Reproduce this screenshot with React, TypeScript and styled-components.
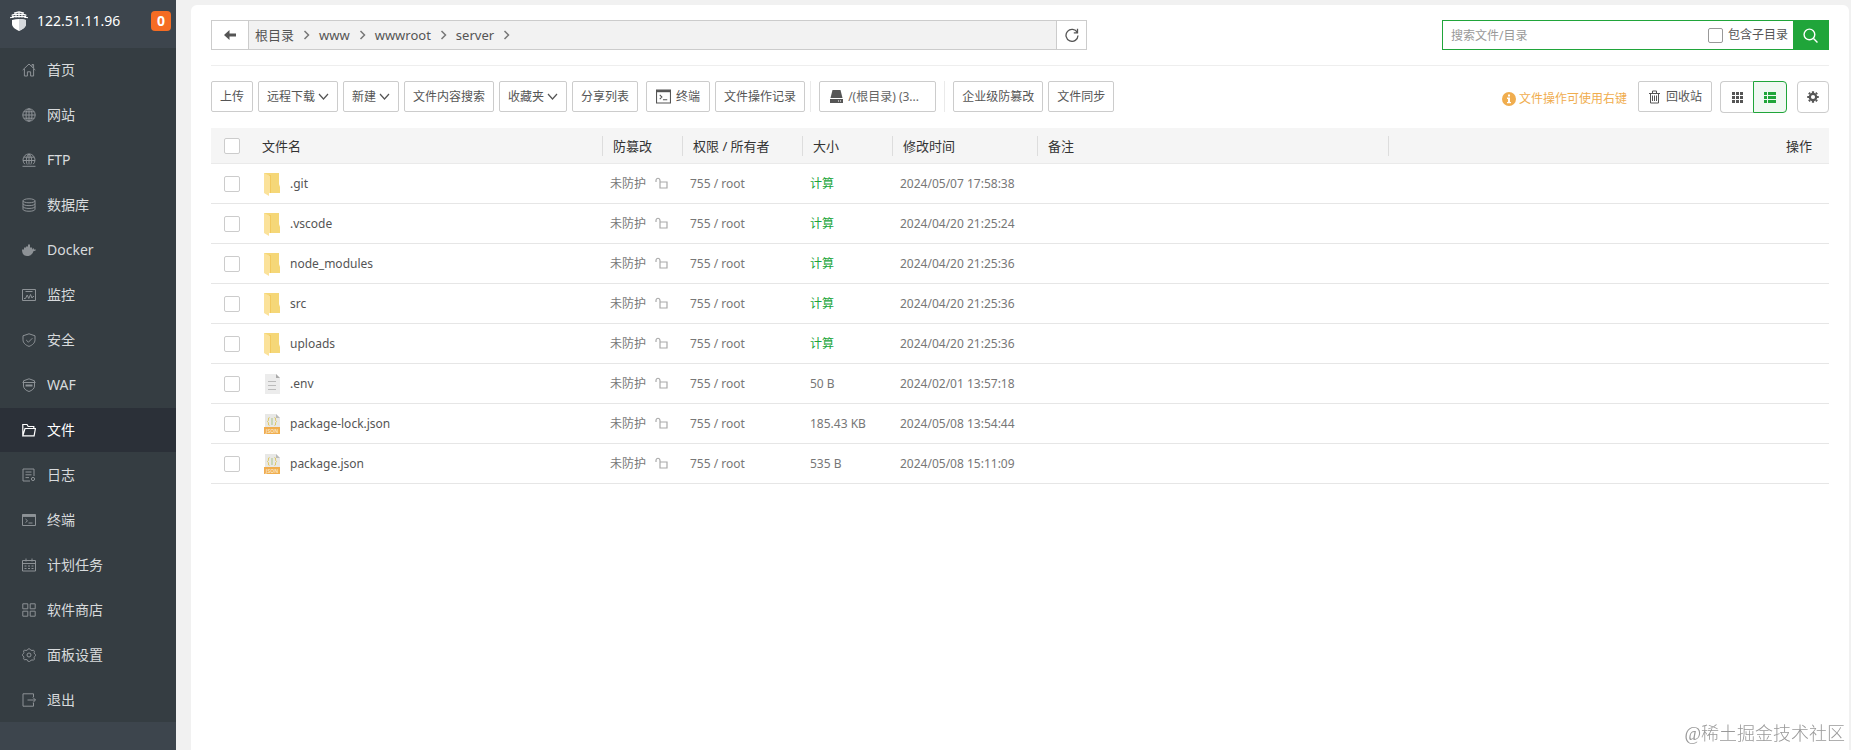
import React from 'react';
import styled, { createGlobalStyle, css } from 'styled-components';

const Global = createGlobalStyle`
  * { box-sizing: border-box; }
  body {
    margin: 0;
    background: #f1f1f1;
    color: #555;
    font: 12px/20px "Noto Sans", "Noto Sans CJK SC", sans-serif;
  }
  button, input { font: inherit; color: inherit; margin: 0; }
  a { color: inherit; text-decoration: none; }
`;

const Page = styled.div`
  display: flex;
  min-height: 100vh;
`;

/* ---------- sidebar ---------- */
const Sidebar = styled.aside`
  flex: 0 0 176px;
  background: #3d454d;
`;
const Brand = styled.header`
  display: flex;
  align-items: center;
  height: 48px;
  padding: 0 5px 6px 10px;
  color: #fff;
  font-size: 14px;
`;
const Host = styled.a`
  flex: 1;
  margin-left: 9px;
`;
const Badge = styled.span`
  width: 20px;
  height: 20px;
  border-radius: 4px;
  background: #f56c23;
  font-weight: 700;
  line-height: 20px;
  text-align: center;
`;
const Menu = styled.nav`
  display: flex;
  flex-direction: column;
  gap: 1px;
  background: #353d42;
`;
const MenuItem = styled.a<{ $active?: boolean }>`
  display: flex;
  align-items: center;
  gap: 11px;
  height: 44px;
  padding-left: 22px;
  color: ${p => (p.$active ? '#fff' : '#d8dbdd')};
  background: ${p => (p.$active ? '#2b3038' : 'transparent')};
  font-size: 14px;
  svg { color: ${p => (p.$active ? '#fff' : '#8d9296')}; }
`;

/* ---------- main panel ---------- */
const Main = styled.main`
  flex: 1;
  min-width: 0;
  margin: 5px 2px 0 15px;
  padding: 15px 20px;
  border-radius: 6px 6px 0 0;
  background: #fff;
`;
const TopBar = styled.div`
  display: flex;
  justify-content: space-between;
  gap: 24px;
  padding-bottom: 15px;
  border-bottom: 1px solid #eee;
`;
const PathBar = styled.div`
  display: flex;
  flex: 0 1 876px;
  height: 30px;
  border: 1px solid #ccc;
  background: #f2f2f2;
`;
const PathButton = styled.button<{ $side: 'left' | 'right' }>`
  display: grid;
  place-items: center;
  flex: none;
  width: ${p => (p.$side === 'left' ? 37 : 30)}px;
  padding: 0;
  border: 0 solid #ccc;
  border-${p => (p.$side === 'left' ? 'right' : 'left')}-width: 1px;
  background: #fff;
`;
const Crumbs = styled.nav`
  display: flex;
  flex: 1;
  align-items: center;
  gap: 8px;
  padding-left: 6px;
  font-size: 13px;
`;
const Crumb = styled.a`
  display: flex;
  align-items: center;
  gap: 8px;
`;
const Search = styled.form`
  display: flex;
  align-items: center;
  flex: 0 1 387px;
  height: 30px;
  border: 1px solid #20a53a;
`;
const SearchInput = styled.input`
  flex: 1;
  min-width: 0;
  height: 28px;
  padding: 0 8px;
  border: 0;
  outline: 0;
  background: transparent;
  &::placeholder { color: #999; opacity: 1; }
`;
const CheckLabel = styled.label`
  display: flex;
  align-items: center;
  gap: 5px;
  margin-right: 5px;
`;
const Check = styled.input.attrs({ type: 'checkbox' })<{ $dark?: boolean }>`
  appearance: none;
  display: block;
  width: ${p => (p.$dark ? 15 : 16)}px;
  height: ${p => (p.$dark ? 15 : 16)}px;
  border: 1px solid ${p => (p.$dark ? '#999' : '#ccc')};
  border-radius: 2px;
  background: #fff;
  &:checked { background: #20a53a; }
`;
const SearchButton = styled.button`
  display: grid;
  place-items: center;
  width: 35px;
  height: 28px;
  padding: 0;
  border: 0;
  background: #20a53a;
  color: #fff;
`;

/* ---------- tool bar ---------- */
const ToolBar = styled.div`
  display: flex;
  align-items: flex-start;
  justify-content: space-between;
  height: 62px;
  padding-top: 15px;
`;
const Tools = styled.div`
  display: flex;
  align-items: flex-start;
  gap: 5px;
`;
const Group = styled(Tools)`
  &:not(:first-child) { margin-left: 3px; }
`;
const Split = styled.span`
  width: 1px;
  height: 31px;
  background: #eaeaea;
`;
const Button = styled.button<{ $leadIcon?: boolean }>`
  display: flex;
  align-items: center;
  gap: ${p => (p.$leadIcon ? 5 : 3)}px;
  height: 31px;
  padding: 0 ${p => (p.$leadIcon ? 9 : 8)}px;
  border: 1px solid #ccc;
  border-radius: 2px;
  background: #fff;
  white-space: nowrap;
`;
const DiskButton = styled(Button)`
  width: 117px;
  padding: 0 10px;
  color: #666;
`;
const Actions = styled.div`
  display: flex;
  align-items: flex-start;
  gap: 8px;
`;
const Tip = styled.span`
  display: flex;
  align-items: center;
  gap: 3px;
  height: 36px;
  margin-right: 3px;
  color: #f0ad4e;
`;
const Toggle = styled.div`
  display: flex;
  margin-right: 2px;
`;
const IconButton = styled.button<{ $kind: 'left' | 'active' | 'single' }>`
  display: grid;
  place-items: center;
  width: ${p => (p.$kind === 'active' ? 34 : p.$kind === 'left' ? 33 : 32)}px;
  height: 32px;
  padding: 0;
  border: 1px solid #ccc;
  border-radius: 4px;
  background: #fff;
  ${p => p.$kind === 'left' && css`border-right: 0; border-radius: 4px 0 0 4px;`}
  ${p => p.$kind === 'active' && css`
    border-color: #20a53a;
    border-radius: 0 4px 4px 0;
    background: #f0f8f2;
    color: #20a53a;
  `}
`;

/* ---------- file table ---------- */
const Table = styled.table`
  width: 100%;
  table-layout: fixed;
  border-collapse: separate;
  border-spacing: 0;
`;
const Col = styled.col<{ $w?: number }>`
  width: ${p => (p.$w ? `${p.$w}px` : 'auto')};
`;
const Th = styled.th<{ $end?: boolean }>`
  height: 36px;
  padding: 0 ${p => (p.$end ? 17 : 0)}px 0 0;
  border-bottom: 1px solid #eaeaea;
  background: #f5f5f5;
  color: #333;
  font-size: 13px;
  font-weight: 400;
  text-align: ${p => (p.$end ? 'right' : 'left')};
`;
const HeadText = styled.div`
  padding-left: 10px;
  border-right: 1px solid #ddd;
`;
const Td = styled.td<{ $name?: boolean }>`
  height: 40px;
  padding: 0 0 0 ${p => (p.$name ? 11 : 7)}px;
  border-bottom: 1px solid #e6e6e6;
  color: ${p => (p.$name ? '#555' : '#777')};
  white-space: nowrap;
`;
const CheckTd = styled(Td)`
  padding-left: 13px;
`;
const CheckCell = styled.div`
  padding-left: 13px;
`;
const FileLink = styled.a`
  display: flex;
  align-items: center;
  gap: 9px;
`;
const Guard = styled.span`
  display: flex;
  align-items: center;
  gap: 9px;
`;
const Calc = styled.a`
  color: #20a53a;
`;
const Watermark = styled.div`
  position: fixed;
  right: 6px;
  bottom: 4px;
  color: #999;
  font: 300 18px/24px "Liberation Serif", "Noto Sans CJK SC", serif;
`;

/* ---------- icons ---------- */
type IconProps = { s?: number; w?: number; children: React.ReactNode };
const Icon = ({ s = 14, w = 1, children }: IconProps) => (
  <svg width={s} height={s} viewBox="0 0 14 14" fill="none" stroke="currentColor" strokeWidth={w} aria-hidden="true">
    {children}
  </svg>
);

const menuIcons: Record<string, React.ReactNode> = {
  home: <path d="M.7 7 7 1l6.3 6M2.4 6v7h3V8.8h3.2V13h3V6M10 3.6V1.5h1.6v3.7" />,
  site: <><circle cx="7" cy="7" r="6.2" /><ellipse cx="7" cy="7" rx="3" ry="6.2" /><path d="M7 .8v12.4M.8 7h12.4M1.8 3.8h10.4M1.8 10.2h10.4" /></>,
  ftp: <><path d="M2.8 11.200A6 6 0 1 1 11.200 11.200" /><path d="M5.200 11.500C3.800 8.500 4 3.500 7 1c3 2.500 3.200 7.500 1.800 10.500M7 1v10.500M1 7.500h12M2 4.200h10M.5 13.300h13" /></>,
  db: <><ellipse cx="7" cy="2.800" rx="6" ry="2" /><path d="M1 2.800v8.500c0 2.600 12 2.600 12 0V2.800M1 5.700c0 2.600 12 2.600 12 0M1 8.500c0 2.600 12 2.600 12 0" /></>,
  docker: <path fill="currentColor" stroke="none" d="M0 6.500h2V4.500h2v-1h2V1.500h2v3h2v2c.6-.2.9-.8.8-1.800.9.5 1.200 1.100 1.200 1.800.7-.2 1.400-.1 2 .2-.5 1-1.400 1.400-2.400 1.400C10.500 11.500 8.300 13 5 13 1.800 13 0 10.800 0 6.500z" />,
  monitor: <path d="M.5 1.500h13v11H.5zM2 10.500h1.500L5.200 7l1.600 3.500L8.500 6.500l1.500 3.500 1-1.500h1M3.500 3.500h7" />,
  shield: <path d="M7 .8 13 2.800v4c0 3-2.400 5.300-6 6.600-3.600-1.300-6-3.600-6-6.600v-4zM4.200 7l2.200 2.200 4-4" />,
  waf: <><path d="M1.500 4.500V2.800L7 .8l5.500 2v1.700M.5 4.500h13M1.500 4.500V8c0 2.600 2.500 4.500 5.500 5.500 3-1 5.500-2.900 5.500-5.500V4.500" /><path strokeWidth="2" d="M3.500 7.500h7" /></>,
  files: <path strokeWidth="1.200" d="M.8 12.800V1.500H5l1.200 2h5.600v2M.8 12.800 3 5.500h10.400l-1.300 7.300z" />,
  log: <><path d="M12 8V1H1v12h7M3.500 4h6M3.500 6.800h6M3.500 9.600h3.500" /><circle cx="11" cy="11" r="1.600" /></>,
  terminal: <><path d="M.5 1.500h13v11H.5zM3.500 6l2 1.800-2 1.800M6.500 10h4" /><path strokeWidth="2.500" d="M.5 2.700h13" /></>,
  cron: <path d="M.5 2.500h13v10.500H.5zM.5 5.500h13M4 .5v3M10 .5v3M2.500 8h2M6 8h2M9.500 8h2M2.500 10.500h2M6 10.500h2M9.500 10.500h2" />,
  store: <path d="M.8.8h5v5h-5zM8.200.8h5v5h-5zM.8 8.200h5v5h-5zM8.200 8.200h5v5h-5z" />,
  settings: <><path d="m5.500 2 .8-1.200h1.400L8.500 2l1.500.5 1.500-.3.900 1-.3 1.500.5 1.200 1 .8v1l-1 .8-.5 1.200.3 1.500-.9 1-1.500-.3-1.500.6-.8 1.200H6.300L5.500 12 4 11.500l-1.500.3-.9-1 .3-1.500-.5-1.200-1-.6v-1l1-.8.5-1.200-.3-1.500.9-1L4 2.500z" /><circle cx="7" cy="7" r="2" /></>,
  exit: <path d="M11.500 4V.8H1v12.400h10.500V10M5.500 7h8M10.800 4.300 13.500 7l-2.700 2.700" />,
};

const Logo = () => (
  <svg width="18" height="20" viewBox="0 0 18 20" aria-hidden="true">
    <path fill="#fff" d="M2 9c5-1.200 9-1.200 14 0v4c0 3-3 5.300-7 7-4-1.700-7-4-7-7z" />
    <path fill="#d5d8dc" d="M9 8v12c4-1.700 7-4 7-7V9C13.500 8.300 11.500 8 9 8z" />
    <path fill="none" stroke="#fff" strokeWidth="1.200" d="M0 6.800C6 4.800 12 4.800 18 6.800M1.500 4.300C7 2.500 11 2.500 16.500 4.300M4 2.200l5-1.400 5 1.400M3 3v4M15 3v4M6 1.500v5M12 1.500v5M9 .5v6" />
  </svg>
);
const Chevron = () => (
  <svg width="11" height="8" viewBox="0 0 11 8" fill="none" stroke="currentColor" strokeWidth="1.200" aria-hidden="true"><path d="m1 1 4.500 5L10 1" /></svg>
);
const CrumbArrow = () => (
  <svg width="9" height="10" viewBox="0 0 9 10" fill="none" stroke="#777" strokeWidth="1.500" aria-hidden="true"><path d="m2.500 1 4 4-4 4" /></svg>
);
const FolderIcon = () => (
  <svg width="18" height="24" viewBox="0 0 18 24" aria-hidden="true">
    <path fill="#f5d778" d="M1 1h15v11l1 3v6H1z" />
    <path fill="#f2c95e" d="M6 3h2v18H6z" />
    <path fill="#fbe29a" d="m1 1 6 3v17H6v3l-5-3z" />
  </svg>
);
const FileIcon = () => (
  <svg width="18" height="24" viewBox="0 0 18 24" aria-hidden="true">
    <path fill="#ececec" d="M2 2h11l4 4v16H2z" />
    <path fill="#aaa" d="M13 2v4h4z" />
    <path stroke="#bbb" d="M5 9.500h8M5 13.500h8M5 17.500h8" />
  </svg>
);
const JsonIcon = () => (
  <svg width="18" height="24" viewBox="0 0 18 24" aria-hidden="true">
    <path fill="#e8e8e6" d="M2 2h11l4 4v10H2z" />
    <path fill="#bbb" d="M13 2v4h4z" />
    <path fill="none" stroke="#e0c75a" d="M6.500 5.500c-2 0 0 3-2 4 2 1 0 4 2 4M11.500 5.500c2 0 0 3 2 4-2 1 0 4-2 4" />
    <path stroke="#a9c48a" d="M9 6v7" />
    <path fill="#f0ad4e" d="M1 15h16v7H1z" />
    <text x="9" y="21" textAnchor="middle" fontSize="5" fontWeight="700" fill="#fbe3bd">JSON</text>
  </svg>
);
const Unlock = () => (
  <svg width="13" height="14" viewBox="0 0 13 14" fill="none" stroke="#aaa" strokeWidth="1.200" aria-hidden="true">
    <path d="M1 5V3.500C1 .5 5 .5 5 3.500V11h7V5H5" />
  </svg>
);

const menu = [
  ['home', '首页'], ['site', '网站'], ['ftp', 'FTP'], ['db', '数据库'], ['docker', 'Docker'],
  ['monitor', '监控'], ['shield', '安全'], ['waf', 'WAF'], ['files', '文件'], ['log', '日志'],
  ['terminal', '终端'], ['cron', '计划任务'], ['store', '软件商店'], ['settings', '面板设置'], ['exit', '退出'],
];
const files = [
  ['folder', '.git', '', '2024/05/07 17:58:38'],
  ['folder', '.vscode', '', '2024/04/20 21:25:24'],
  ['folder', 'node_modules', '', '2024/04/20 21:25:36'],
  ['folder', 'src', '', '2024/04/20 21:25:36'],
  ['folder', 'uploads', '', '2024/04/20 21:25:36'],
  ['file', '.env', '50 B', '2024/02/01 13:57:18'],
  ['json', 'package-lock.json', '185.43 KB', '2024/05/08 13:54:44'],
  ['json', 'package.json', '535 B', '2024/05/08 15:11:09'],
];
const columns: [string, number][] = [
  ['文件名', 351], ['防篡改', 80], ['权限 / 所有者', 120], ['大小', 90], ['修改时间', 145], ['备注', 351],
];
const fileIcons: Record<string, React.ReactNode> = { folder: <FolderIcon />, file: <FileIcon />, json: <JsonIcon /> };

export default function App() {
  return (
    <>
      <Global />
      <Page>
        <Sidebar>
          <Brand>
            <Logo />
            <Host href="#">122.51.11.96</Host>
            <Badge>0</Badge>
          </Brand>
          <Menu>
            {menu.map(([icon, label]) => (
              <MenuItem key={icon} href="#" $active={icon === 'files'}>
                <Icon>{menuIcons[icon]}</Icon>
                {label}
              </MenuItem>
            ))}
          </Menu>
        </Sidebar>
        <Main>
          <TopBar>
            <PathBar>
              <PathButton $side="left" aria-label="返回">
                <svg width="12" height="10" viewBox="0 0 12 10" fill="#555"><path d="M5.500 0v3.500H12v3H5.500V10L0 5z" /></svg>
              </PathButton>
              <Crumbs>
                {['根目录', 'www', 'wwwroot', 'server'].map(c => (
                  <Crumb key={c} href="#">{c}<CrumbArrow /></Crumb>
                ))}
              </Crumbs>
              <PathButton $side="right" aria-label="刷新">
                <Icon w={1.3}><path d="M12.300 4.500A6 6 0 1 0 13 7.500M12.500.8v4H8.800" /></Icon>
              </PathButton>
            </PathBar>
            <Search onSubmit={e => e.preventDefault()}>
              <SearchInput placeholder="搜索文件/目录" aria-label="搜索文件/目录" />
              <CheckLabel><Check $dark />包含子目录</CheckLabel>
              <SearchButton aria-label="搜索">
                <Icon s={15} w={1.3}><circle cx="6" cy="6" r="5" /><path d="m9.800 9.800 3.700 3.700" /></Icon>
              </SearchButton>
            </Search>
          </TopBar>

          <ToolBar>
            <Tools>
              <Group>
                <Button>上传</Button>
                <Button>远程下载<Chevron /></Button>
                <Button>新建<Chevron /></Button>
                <Button>文件内容搜索</Button>
                <Button>收藏夹<Chevron /></Button>
                <Button>分享列表</Button>
              </Group>
              <Group>
                <Button $leadIcon>
                  <Icon s={15}><path d="M.5 1h13v12H.5zM3.500 5.500l2 2-2 2M6.500 10h4" /><path strokeWidth="2" d="M.5 2h13" /></Icon>
                  终端
                </Button>
                <Button>文件操作记录</Button>
                <Split />
              </Group>
              <Group>
                <DiskButton $leadIcon>
                  <svg width="13" height="13" viewBox="0 0 13 13" fill="#555" aria-hidden="true"><path d="M2.500 0h8L12.500 8h-12zM0 9h13v4H0z" /><path fill="#fff" d="M8 10.500h1v1H8zM10 10.500h1v1h-1z" /></svg>
                  /(根目录) (3...
                </DiskButton>
              </Group>
              <Group>
                <Split />
              </Group>
              <Group>
                <Button>企业级防篡改</Button>
                <Button>文件同步</Button>
              </Group>
            </Tools>
            <Actions>
              <Tip>
                <svg width="14" height="14" viewBox="0 0 14 14" aria-hidden="true"><circle cx="7" cy="7" r="7" fill="#f0ad4e" /><path fill="#fff" d="M6 2.500h2v2H6zM5 5.500h3V10h1v1.300H5V10h1V7H5z" /></svg>
                文件操作可使用右键
              </Tip>
              <Button $leadIcon>
                <svg width="13" height="14" viewBox="0 0 13 14" fill="none" stroke="currentColor" aria-hidden="true"><path d="M1 3.500h11M4.500 3V1h4v2M2.500 3.500v9.500h8V3.500M4.500 5.500V11M6.500 5.500V11M8.500 5.500V11" /></svg>
                回收站
              </Button>
              <Toggle>
                <IconButton $kind="left" aria-label="图标视图">
                  <svg width="11" height="11" viewBox="0 0 11 11" fill="currentColor"><path d="M0 0h3v3H0zM4 0h3v3H4zM8 0h3v3H8zM0 4h3v3H0zM4 4h3v3H4zM8 4h3v3H8zM0 8h3v3H0zM4 8h3v3H4zM8 8h3v3H8z" /></svg>
                </IconButton>
                <IconButton $kind="active" aria-label="列表视图">
                  <svg width="12" height="11" viewBox="0 0 12 11" fill="currentColor"><path d="M0 0h3v3H0zM4 0h8v3H4zM0 4h3v3H0zM4 4h8v3H4zM0 8h3v3H0zM4 8h8v3H4z" /></svg>
                </IconButton>
              </Toggle>
              <IconButton $kind="single" aria-label="设置">
                <Icon s={12}>
                  <circle cx="7" cy="7" r="3.700" strokeWidth="2.600" />
                  <path strokeWidth="2.600" d="M7 .3v2M7 11.700v2M.3 7h2M11.700 7h2M2.200 2.200l1.400 1.400M10.400 10.400l1.400 1.400M2.200 11.800l1.400-1.400M10.400 3.600l1.400-1.400" />
                </Icon>
              </IconButton>
            </Actions>
          </ToolBar>

          <Table>
            <colgroup>
              <Col $w={41} />
              {columns.map(([label, width]) => <Col key={label} $w={width} />)}
              <Col />
            </colgroup>
            <thead>
              <tr>
                <Th><CheckCell><Check aria-label="全选" /></CheckCell></Th>
                {columns.map(([label]) => <Th key={label}><HeadText>{label}</HeadText></Th>)}
                <Th $end>操作</Th>
              </tr>
            </thead>
            <tbody>
              {files.map(([kind, name, size, time]) => (
                <tr key={name}>
                  <CheckTd><Check aria-label={name} /></CheckTd>
                  <Td $name><FileLink href="#">{fileIcons[kind]}{name}</FileLink></Td>
                  <Td><Guard>未防护<Unlock /></Guard></Td>
                  <Td>755 / root</Td>
                  <Td>{size || <Calc href="#">计算</Calc>}</Td>
                  <Td>{time}</Td>
                  <Td />
                  <Td />
                </tr>
              ))}
            </tbody>
          </Table>
        </Main>
      </Page>
      <Watermark>@稀土掘金技术社区</Watermark>
    </>
  );
}
